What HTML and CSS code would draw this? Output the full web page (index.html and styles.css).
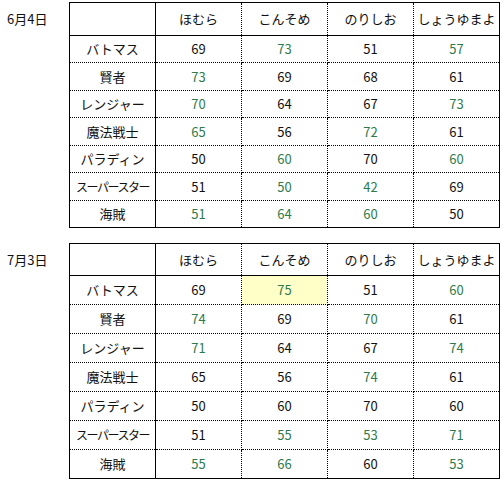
FILE: index.html
```html
<!DOCTYPE html>
<html lang="ja">
<head>
<meta charset="utf-8">
<link rel="stylesheet" href="styles.css">
</head>
<body>
<div class="page">
  <section class="block first">
    <div class="date">6月4日</div>
    <table class="grid">
      <tr class="head"><th></th><th>ほむら</th><th>こんそめ</th><th>のりしお</th><th>しょうゆまよ</th></tr>
      <tr><th>バトマス</th><td>69</td><td class="g">73</td><td>51</td><td class="g">57</td></tr>
      <tr><th>賢者</th><td class="g">73</td><td>69</td><td>68</td><td>61</td></tr>
      <tr><th>レンジャー</th><td class="g">70</td><td>64</td><td>67</td><td class="g">73</td></tr>
      <tr><th>魔法戦士</th><td class="g">65</td><td>56</td><td class="g">72</td><td>61</td></tr>
      <tr><th>パラディン</th><td>50</td><td class="g">60</td><td>70</td><td class="g">60</td></tr>
      <tr><th class="narrow">スーパースター</th><td>51</td><td class="g">50</td><td class="g">42</td><td>69</td></tr>
      <tr><th>海賊</th><td class="g">51</td><td class="g">64</td><td class="g">60</td><td>50</td></tr>
    </table>
  </section>
  <section class="block second">
    <div class="date">7月3日</div>
    <table class="grid">
      <tr class="head"><th></th><th>ほむら</th><th>こんそめ</th><th>のりしお</th><th>しょうゆまよ</th></tr>
      <tr><th>バトマス</th><td>69</td><td class="g hl">75</td><td>51</td><td class="g">60</td></tr>
      <tr><th>賢者</th><td class="g">74</td><td>69</td><td class="g">70</td><td>61</td></tr>
      <tr><th>レンジャー</th><td class="g">71</td><td>64</td><td>67</td><td class="g">74</td></tr>
      <tr><th>魔法戦士</th><td>65</td><td>56</td><td class="g">74</td><td>61</td></tr>
      <tr><th>パラディン</th><td>50</td><td>60</td><td>70</td><td>60</td></tr>
      <tr><th class="narrow">スーパースター</th><td>51</td><td class="g">55</td><td class="g">53</td><td class="g">71</td></tr>
      <tr><th>海賊</th><td class="g">55</td><td class="g">66</td><td>60</td><td class="g">53</td></tr>
    </table>
  </section>
</div>
</body>
</html>
```
FILE: styles.css
```css
html, body {
  margin: 0;
  padding: 0;
  background: #fff;
}
body {
  font-family: "Noto Sans CJK JP", "DejaVu Sans", sans-serif;
  font-size: 13px;
  color: #111;
}
.page {
  padding: 2px 0 0 0;
  display: flex;
  flex-direction: column;
  gap: 15px;
}
.block {
  display: flex;
  align-items: flex-start;
}
.date {
  width: 71px;
  box-sizing: border-box;
  padding-left: 7px;
  height: 33px;
  line-height: 33px;
}
.grid {
  border-collapse: collapse;
  border: 1px solid #000;
  table-layout: fixed;
  width: 427px;
}
.grid th, .grid td {
  width: 85px;
  padding: 0;
  text-align: center;
  font-weight: normal;
  border-right: 1px dotted #000;
  border-bottom: 1px dotted #000;
  line-height: 16px;
}
.grid tr > :first-child {
  border-right: 1px solid #000;
}
.grid tr > :last-child {
  border-right: 1px solid #000;
}
.grid tr.head > * {
  border-bottom: 1px solid #000;
}
.grid tr:last-child > * {
  border-bottom: 1px solid #000;
}
.first .grid tr > * {
  height: 26px;
}
.first .grid tr:nth-child(odd) > * {
  height: 27px;
}
.first .grid tr.head > * {
  height: 32px;
}
.second .grid tr > * {
  height: 28px;
}
.second .grid tr.head > * {
  height: 31px;
}
.narrow {
  letter-spacing: -1.5px;
  font-size: 12px;
}
.g {
  color: #2f7a4c;
}
.hl {
  background: #ffffc8;
}
```
